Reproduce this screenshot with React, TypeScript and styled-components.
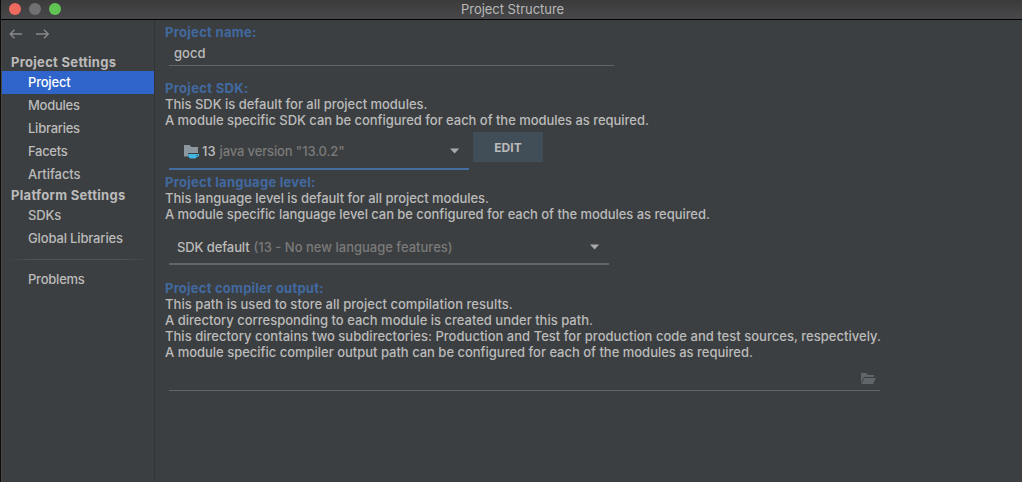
import React from 'react';
import styled, { createGlobalStyle } from 'styled-components';

const GlobalStyle = createGlobalStyle`
  * { box-sizing: border-box; }
  body { margin: 0; background: #3c3f41; overflow: hidden; }
`;

const Window = styled.div`
  display: flex;
  flex-direction: column;
  width: 1022px;
  height: 482px;
  border-left: 1px solid #0c0c0c;
  background: #3c3f41;
  color: #bbbbbb;
  font: 500 13px/16px Inter, sans-serif;
  white-space: nowrap;
`;

const TitleBar = styled.header`
  display: flex;
  align-items: center;
  height: 20px;
  flex: none;
  padding: 0 0 2px 8px;
  background: linear-gradient(#3b3b3c, #48484a);
  border-bottom: 1px solid #000;
`;

const Lights = styled.div`
  display: flex;
  gap: 8px;
  width: 60px;
`;

const Light = styled.span<{ $color: string }>`
  width: 12px;
  height: 12px;
  border-radius: 50%;
  background: ${(p) => p.$color};
`;

const Title = styled.h1`
  flex: 1;
  margin: 0;
  padding: 1px 0 0 392px;
  font-size: 13px;
  font-weight: 400;
  line-height: 16px;
  letter-spacing: -0.03px;
  color: #b9b9b9;
`;

const Body = styled.div`
  display: flex;
  flex: 1;
`;

const Sidebar = styled.nav`
  display: flex;
  flex-direction: column;
  width: 154px;
  border-left: 1px solid #4a4744;
  border-right: 1px solid #323537;
`;

const History = styled.div`
  display: flex;
  gap: 13px;
  height: 34px;
  padding: 8px 0 0 7px;
`;

const GroupTitle = styled.div<{ $shift?: number }>`
  height: 17px;
  padding: ${(p) => p.$shift ?? 0}px 0 0 9px;
  font-weight: 700;
  line-height: 17px;
  letter-spacing: 0.3px;
`;

const NavItem = styled.div<{ $active?: boolean; $ls?: number }>`
  height: 23px;
  padding-left: 26px;
  line-height: 23px;
  letter-spacing: ${(p) => p.$ls ?? 0}px;
  color: ${(p) => (p.$active ? '#ffffff' : 'inherit')};
  background: ${(p) => (p.$active ? '#2f65ca' : 'transparent')};
`;

const NavGroup = styled.div<{ $shift?: number }>`
  padding-top: ${(p) => p.$shift ?? 0}px;
`;

const Divider = styled.div`
  height: 1px;
  margin: 9px 7px 8px 5px;
  background: linear-gradient(90deg, #3c3f41, #515456 20%, #515456 80%, #3c3f41);
`;

const Content = styled.main`
  display: flex;
  flex-direction: column;
  padding: 4px 0 0 10px;
`;

const Section = styled.section<{ $height: number }>`
  height: ${(p) => p.$height}px;
`;

const Heading = styled.h2<{ $ls?: number }>`
  margin: 0;
  font-size: 13px;
  font-weight: 700;
  line-height: 16px;
  letter-spacing: ${(p) => p.$ls ?? 0}px;
  color: #4169a0;
`;

const Line = styled.p<{ $ls?: number }>`
  margin: 0;
  letter-spacing: ${(p) => p.$ls ?? 0}px;
`;

const NameField = styled.div`
  width: 445px;
  height: 26px;
  margin-left: 4px;
  padding: 5px 0 0 5px;
  border-bottom: 1px solid #646464;
`;

const SdkRow = styled.div`
  display: flex;
  gap: 4px;
  padding: 4px 0 0 4px;
`;

const Combo = styled.div<{ $width: number; $height: number; $line: string; $pad: number }>`
  display: flex;
  align-items: center;
  width: ${(p) => p.$width}px;
  height: ${(p) => p.$height}px;
  padding: 2px 9px 0 ${(p) => p.$pad}px;
  border-bottom: 2px solid ${(p) => p.$line};
`;

const LevelRow = styled.div`
  padding: 6px 0 0 4px;
`;

const Value = styled.span<{ $ls?: number }>`
  letter-spacing: ${(p) => p.$ls ?? 0}px;
`;

const Version = styled(Value)`
  margin-left: 2px;
`;

const Hint = styled.span<{ $ls?: number }>`
  flex: 1;
  margin-left: 4px;
  letter-spacing: ${(p) => p.$ls ?? 0}px;
  color: #7a7a7a;
`;

const EditButton = styled.button`
  width: 70px;
  height: 30px;
  padding: 1px 0 0;
  border: 0;
  background: #414d57;
  color: #bbbbbb;
  font: 700 12px/29px Inter, sans-serif;
`;

const PathField = styled.div`
  display: flex;
  justify-content: flex-end;
  width: 711px;
  height: 30px;
  margin: 1px 0 0 4px;
  padding: 12px 4px 0 0;
  border-bottom: 1px solid #646464;
`;

const Arrow = ({ flip }: { flip?: boolean }) => (
  <svg width="14" height="12" viewBox="0 0 14 12" fill="none" stroke="#87898b" strokeWidth="1.4">
    <path d={flip ? 'M0 6H12.5M8 1.7L12.3 6L8 10.3' : 'M13 6H1M5.5 1.7L1.2 6L5.5 10.3'} />
  </svg>
);

const Caret = () => (
  <svg width="10" height="6" viewBox="0 0 10 6">
    <path d="M0 0.5H9.2L4.6 5.5Z" fill="#a7a9ab" />
  </svg>
);

const SdkIcon = () => (
  <svg width="16" height="16" viewBox="0 0 16 16">
    <path d="M0 2H5.5L7.5 4H14V10H4V13.5H0Z" fill="#8c979f" />
    <path d="M4 11H15V13.3L12.6 13.9C12.2 14.8 11.4 15.6 10.4 15.6H7C5.2 15.6 4 13.6 4 11Z" fill="#40b6e0" />
    <path d="M12.4 12.3H14" stroke="#3c3f41" strokeWidth="0.7" />
  </svg>
);

const OpenFolderIcon = () => (
  <svg width="15" height="12" viewBox="0 0 15 12" fill="#5f6669">
    <path d="M0 0H5L7 2H13V4H3L0 10Z" />
    <path d="M3.4 5H15L12 11H0.4Z" />
  </svg>
);

export default function App() {
  return (
    <>
      <GlobalStyle />
      <Window>
        <TitleBar>
          <Lights>
            <Light $color="#ee6a5f" />
            <Light $color="#707072" />
            <Light $color="#61c554" />
          </Lights>
          <Title>Project Structure</Title>
        </TitleBar>
        <Body>
          <Sidebar>
            <History>
              <Arrow />
              <Arrow flip />
            </History>
            <GroupTitle>Project Settings</GroupTitle>
            <NavGroup>
              <NavItem $active $ls={-0.2}>Project</NavItem>
              <NavItem $ls={-0.25}>Modules</NavItem>
              <NavItem $ls={-0.25}>Libraries</NavItem>
              <NavItem $ls={-0.3}>Facets</NavItem>
              <NavItem $ls={-0.06}>Artifacts</NavItem>
            </NavGroup>
            <GroupTitle $shift={1}>Platform Settings</GroupTitle>
            <NavGroup $shift={1}>
              <NavItem $ls={-0.15}>SDKs</NavItem>
              <NavItem $ls={-0.15}>Global Libraries</NavItem>
            </NavGroup>
            <Divider />
            <NavItem $ls={-0.23}>Problems</NavItem>
          </Sidebar>
          <Content>
            <Section $height={56}>
              <Heading $ls={0.3}>Project name:</Heading>
              <NameField>gocd</NameField>
            </Section>
            <Section $height={94}>
              <Heading $ls={0.32}>Project SDK:</Heading>
              <Line $ls={-0.02}>This SDK is default for all project modules.</Line>
              <Line $ls={-0.038}>A module specific SDK can be configured for each of the modules as required.</Line>
              <SdkRow>
                <Combo $width={300} $height={38} $line="#466d9f" $pad={15}>
                  <SdkIcon />
                  <Version>13</Version>
                  <Hint $ls={-0.13}>java version "13.0.2"</Hint>
                  <Caret />
                </Combo>
                <EditButton>EDIT</EditButton>
              </SdkRow>
            </Section>
            <Section $height={106}>
              <Heading $ls={0.27}>Project language level:</Heading>
              <Line $ls={-0.045}>This language level is default for all project modules.</Line>
              <Line $ls={-0.056}>A module specific language level can be configured for each of the modules as required.</Line>
              <LevelRow>
                <Combo $width={440} $height={37} $line="#646464" $pad={8}>
                  <Value $ls={-0.1}>SDK default</Value>
                  <Hint>(13 - No new language features)</Hint>
                  <Caret />
                </Combo>
              </LevelRow>
            </Section>
            <Section $height={110}>
              <Heading $ls={0.23}>Project compiler output:</Heading>
              <Line $ls={0.035}>This path is used to store all project compilation results.</Line>
              <Line>A directory corresponding to each module is created under this path.</Line>
              <Line $ls={0.022}>This directory contains two subdirectories: Production and Test for production code and test sources, respectively.</Line>
              <Line $ls={-0.015}>A module specific compiler output path can be configured for each of the modules as required.</Line>
              <PathField>
                <OpenFolderIcon />
              </PathField>
            </Section>
          </Content>
        </Body>
      </Window>
    </>
  );
}
